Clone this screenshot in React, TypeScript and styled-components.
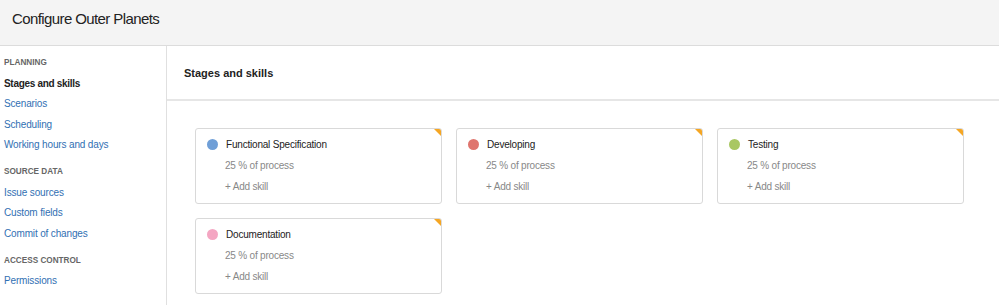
import React from 'react'
import styled, { createGlobalStyle } from 'styled-components'

const GlobalStyle = createGlobalStyle`
  body {
    margin: 0;
    background: #fff;
    font-family: "Liberation Sans", Arial, sans-serif;
    color: #333;
  }
`

const Page = styled.div`
  width: 999px;
  height: 305px;
  overflow: hidden;
  display: flex;
  flex-direction: column;
`

const TopBar = styled.header`
  height: 45px;
  flex: none;
  background: #f4f4f4;
  border-bottom: 1px solid #dcdcdc;
  display: flex;
  align-items: center;
  padding: 0 12px;
`

const Title = styled.h1`
  margin: 0 0 9px;
  font-size: 15px;
  letter-spacing: -0.6px;
  font-weight: normal;
  color: #222;
`

const Body = styled.div`
  flex: 1;
  display: flex;
`

const Sidebar = styled.nav`
  width: 167px;
  flex: none;
  border-right: 1px solid #e0e0e0;
  padding: 7px 4px 0;
  box-sizing: border-box;
  display: flex;
  flex-direction: column;
`

const Section = styled.div<{ first?: boolean }>`
  font-size: 8.2px;
  font-weight: bold;
  color: #666;
  text-transform: uppercase;
  height: 20.5px;
  line-height: 20.5px;
  margin-top: ${(p) => (p.first ? '0' : '6.5px')};
`

const NavLink = styled.a<{ active?: boolean }>`
  font-size: 10px;
  letter-spacing: ${(p) => (p.active ? '-0.3px' : '-0.15px')};
  height: 20.5px;
  line-height: 20.5px;
  color: ${(p) => (p.active ? '#222' : '#3170b3')};
  font-weight: ${(p) => (p.active ? 'bold' : 'normal')};
  text-decoration: none;
  cursor: pointer;
`

const Main = styled.main`
  flex: 1;
  display: flex;
  flex-direction: column;
`

const MainHeader = styled.div`
  height: 53px;
  flex: none;
  border-bottom: 2px solid #e6e6e6;
  display: flex;
  align-items: center;
  padding-left: 17px;
`

const Heading = styled.h2`
  margin: 0;
  font-size: 11px;
  font-weight: bold;
  color: #222;
`

const Grid = styled.div`
  display: grid;
  grid-template-columns: repeat(3, 247px);
  gap: 14px;
  padding: 27px 0 0 28px;
`

const Card = styled.div`
  position: relative;
  height: 76px;
  box-sizing: border-box;
  border: 1px solid #d9d9d9;
  border-radius: 3px;
  padding: 8px 11px 0;
  display: flex;
  flex-direction: column;
  &::after {
    content: '';
    position: absolute;
    top: 0;
    right: 0;
    border-style: solid;
    border-width: 0 7px 7px 0;
    border-color: transparent #f5a623 transparent transparent;
    border-top-right-radius: 2px;
  }
`

const CardTitle = styled.div`
  display: flex;
  align-items: center;
  gap: 8px;
  font-size: 10px;
  letter-spacing: -0.2px;
  color: #222;
  height: 14px;
`

const Dot = styled.span<{ color: string }>`
  width: 11px;
  height: 11px;
  border-radius: 50%;
  background: ${(p) => p.color};
  flex: none;
`

const Meta = styled.div`
  font-size: 10px;
  letter-spacing: -0.2px;
  color: #888;
  margin-left: 18px;
  margin-top: 7.5px;
  height: 14px;
  line-height: 14px;
`

const AddSkill = styled(Meta)`
  cursor: pointer;
`

const stages = [
  { name: 'Functional Specification', color: '#6f9fd7' },
  { name: 'Developing', color: '#df756e' },
  { name: 'Testing', color: '#a9c763' },
  { name: 'Documentation', color: '#f4a6c2' },
]

export default function App() {
  return (
    <Page>
      <GlobalStyle />
      <TopBar>
        <Title>Configure Outer Planets</Title>
      </TopBar>
      <Body>
        <Sidebar>
          <Section first>Planning</Section>
          <NavLink active>Stages and skills</NavLink>
          <NavLink>Scenarios</NavLink>
          <NavLink>Scheduling</NavLink>
          <NavLink>Working hours and days</NavLink>
          <Section>Source data</Section>
          <NavLink>Issue sources</NavLink>
          <NavLink>Custom fields</NavLink>
          <NavLink>Commit of changes</NavLink>
          <Section>Access control</Section>
          <NavLink>Permissions</NavLink>
        </Sidebar>
        <Main>
          <MainHeader>
            <Heading>Stages and skills</Heading>
          </MainHeader>
          <Grid>
            {stages.map((s) => (
              <Card key={s.name}>
                <CardTitle>
                  <Dot color={s.color} />
                  {s.name}
                </CardTitle>
                <Meta>25 % of process</Meta>
                <AddSkill>+ Add skill</AddSkill>
              </Card>
            ))}
          </Grid>
        </Main>
      </Body>
    </Page>
  )
}
